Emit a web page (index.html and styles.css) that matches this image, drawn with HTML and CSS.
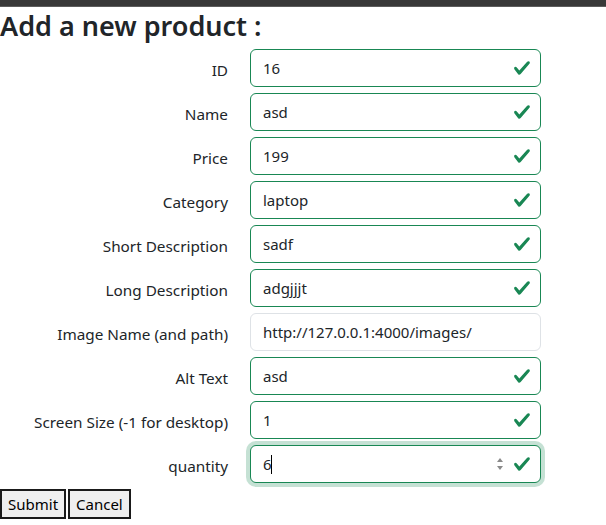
FILE: index.html
```html
<!DOCTYPE html>
<html>
<head>
<meta charset="utf-8">
<link rel="stylesheet" href="styles.css">
</head>
<body>
<div class="topbar"></div>
<h2 class="title">Add a new product :</h2>
<form class="form">
  <label class="lbl">ID</label>
  <div class="field valid"><input class="ctl" value="16"></div>
  <label class="lbl">Name</label>
  <div class="field valid"><input class="ctl" value="asd"></div>
  <label class="lbl">Price</label>
  <div class="field valid"><input class="ctl" value="199"></div>
  <label class="lbl">Category</label>
  <div class="field valid"><input class="ctl" value="laptop"></div>
  <label class="lbl">Short Description</label>
  <div class="field valid"><input class="ctl" value="sadf"></div>
  <label class="lbl">Long Description</label>
  <div class="field valid"><input class="ctl" value="adgjjjt"></div>
  <label class="lbl">Image Name (and path)</label>
  <div class="field"><input class="ctl" value="http://127.0.0.1:4000/images/"></div>
  <label class="lbl">Alt Text</label>
  <div class="field valid"><input class="ctl" value="asd"></div>
  <label class="lbl">Screen Size (-1 for desktop)</label>
  <div class="field valid"><input class="ctl" value="1"></div>
  <label class="lbl">quantity</label>
  <div class="field valid focus">
    <input class="ctl" value="6"><span class="caret"></span>
    <svg class="spin" width="8" height="18" viewBox="0 0 8 18"><path d="M4 3 7 7H1z" fill="#8a8a8a"/><path d="M4 15 7 11H1z" fill="#8a8a8a"/></svg>
  </div>
  <div class="actions">
    <button type="button" class="btn">Submit</button><button type="button" class="btn">Cancel</button>
  </div>
</form>
</body>
</html>
```
FILE: styles.css
```css
html, body {
  margin: 0;
  padding: 0;
  background: #fff;
}
body {
  font-family: "Noto Sans", "Open Sans", sans-serif;
  font-size: 15px;
  color: #212529;
}
.topbar {
  height: 6px;
  background: #383838;
  border-bottom: 1px solid #5c5c5c;
}
.title {
  margin: 3px 0 7px 0;
  font-size: 27px;
  font-weight: 600;
  line-height: 32px;
  color: #212529;
}
.form {
  display: grid;
  grid-template-columns: 228px 291px;
  column-gap: 22px;
  row-gap: 6px;
  align-items: center;
}
.lbl {
  text-align: right;
  white-space: nowrap;
  padding-top: 4px;
  font-size: 15.3px;
}
.field {
  position: relative;
  height: 38px;
}
.ctl {
  box-sizing: border-box;
  width: 100%;
  height: 38px;
  border: 1px solid #dee2e6;
  border-radius: 6px;
  padding: 0 12px;
  font: inherit;
  color: #212529;
  background: #fff;
  outline: none;
}
.valid .ctl {
  border-color: #198754;
  background-image: url("data:image/svg+xml,%3csvg xmlns='http://www.w3.org/2000/svg' viewBox='0 0 8 8'%3e%3cpath fill='%23198754' d='M2.3 6.73.6 4.53c-.4-1.04.46-1.4 1.1-.8l1.1 1.4 3.4-3.8c.6-.63 1.6-.27 1.2.7l-4 4.6c-.43.5-.8.4-1.1.1z'/%3e%3c/svg%3e");
  background-repeat: no-repeat;
  background-position: right 9px center;
  background-size: 18px 18px;
}
.focus .ctl {
  box-shadow: 0 0 0 4px rgba(25, 135, 84, 0.25);
}
.caret {
  position: absolute;
  left: 21px;
  top: 10px;
  width: 1px;
  height: 19px;
  background: #000;
}
.spin {
  position: absolute;
  right: 37px;
  top: 10px;
}
.actions {
  grid-column: 1 / 3;
  display: flex;
  gap: 2px;
}
.btn {
  font: inherit;
  font-size: 15px;
  height: 30px;
  padding: 0 6px;
  background: #efefef;
  border: 2px solid #1a1a1a;
  border-radius: 0;
  color: #000;
}
```
